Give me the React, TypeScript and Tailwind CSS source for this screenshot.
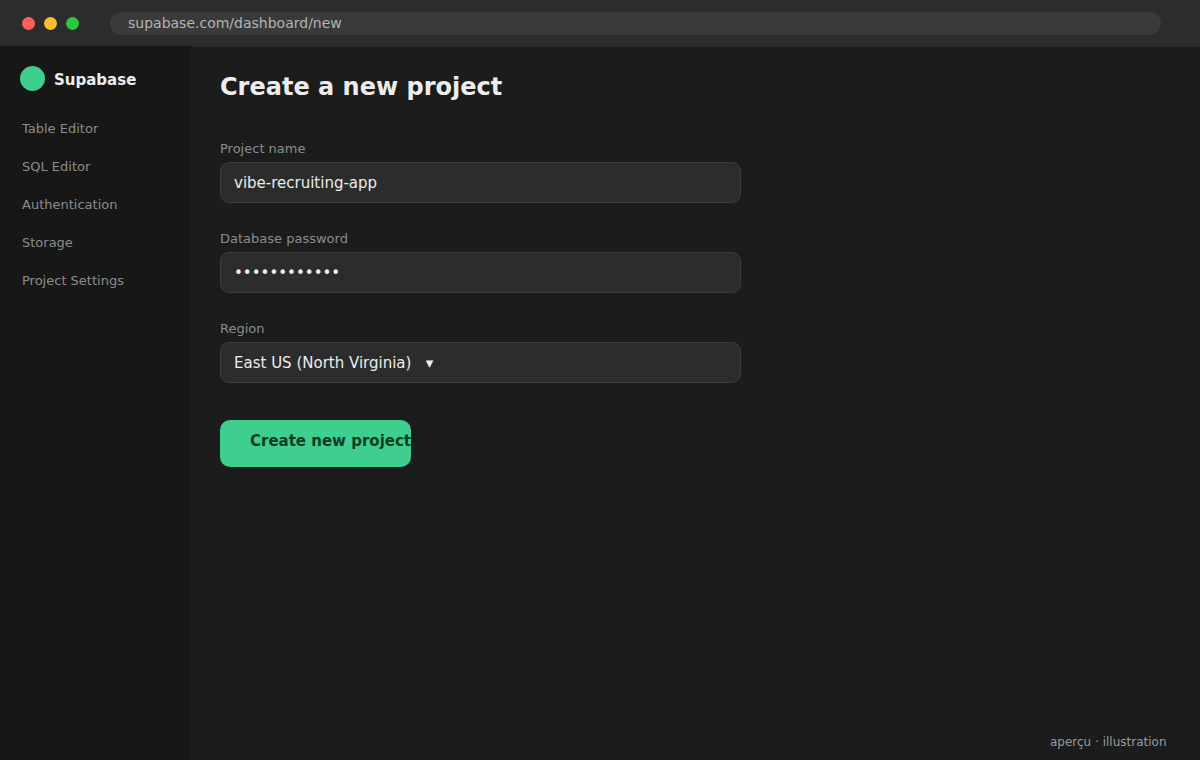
const navItems = ['Table Editor', 'SQL Editor', 'Authentication', 'Storage', 'Project Settings'];

const Field = ({ label, value }: { label: string; value: string }) => {
    return (
        <div className="h-[90px] w-[521px]">
            <div className="h-[21px] text-[13px] leading-[15px] text-[#8c8c8c] whitespace-pre">{label}</div>
            <div className="h-[41px] rounded-[9px] border border-[#3c3c3c] bg-[#2c2c2c] pl-[13px] pt-[11px] text-[15px] leading-[18px] text-[#ededed] whitespace-pre">
                {value}
            </div>
        </div>
    );
};

const App = () => {
    return (
        <div className="flex h-[760px] w-[1200px] flex-col overflow-hidden bg-[#1c1c1c] font-['DejaVu_Sans',sans-serif]">
            <header className="flex h-[46px] shrink-0 items-center bg-[#2c2c2c] pl-[22px]">
                <div className="flex gap-[9px]">
                    <span className="size-[13px] rounded-full bg-[#ff5f57]" />
                    <span className="size-[13px] rounded-full bg-[#febc2e]" />
                    <span className="size-[13px] rounded-full bg-[#28c840]" />
                </div>
                <div className="ml-[31px] h-[23px] w-[1051px] rounded-full bg-[#3a3a3a] pl-[18px] text-[14px] leading-[22px] text-[#b4b4b4]">
                    supabase.com/dashboard/new
                </div>
            </header>
            <div className="flex flex-1">
                <aside className="w-[191px] bg-[#171717] pt-5">
                    <div className="flex h-[25px] items-center gap-[9px] pl-5">
                        <span className="size-[25px] rounded-full bg-[#3ecf8e]" />
                        <span className="pt-[3px] text-[15px] font-bold text-[#ededed]">Supabase</span>
                    </div>
                    <nav className="flex flex-col pt-[19px] pl-[22px] text-[13px] leading-[38px] text-[#8c8c8c]">
                        {navItems.map((item) => (
                            <a key={item}>{item}</a>
                        ))}
                    </nav>
                </aside>
                <main className="flex flex-1 flex-col border-t border-[#2c2c2c] pl-[29px] pt-[25px]">
                    <h1 className="h-[69px] text-[24px] leading-[30px] font-bold text-[#ededed]">Create a new project</h1>
                    <Field label="Project name" value="vibe-recruiting-app" />
                    <Field label="Database password" value="••••••••••••" />
                    <Field label="Region" value="East US (North Virginia)   ▾" />
                    <button className="mt-[9px] h-[47px] w-[191px] rounded-[10px] bg-[#3ecf8e] pb-[5px] pl-[30px] text-left text-[15px] font-bold whitespace-nowrap text-[#0a3c28]">
                        Create new project
                    </button>
                    <footer className="mt-auto pr-[33.5px] pb-[11px] text-right text-[12px] leading-[14px] text-[#969ba0]">aperçu · illustration</footer>
                </main>
            </div>
        </div>
    );
};

export default App;
